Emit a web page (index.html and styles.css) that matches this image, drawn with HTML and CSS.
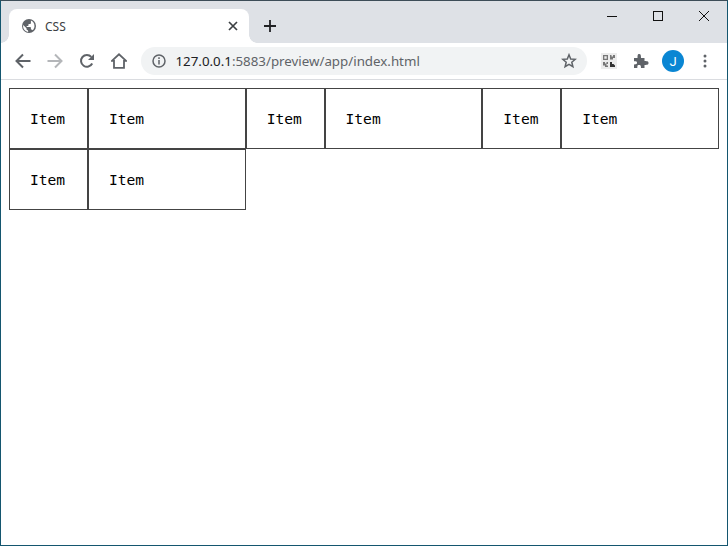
FILE: index.html
```html
<!DOCTYPE html>
<html lang="en">
<head>
<meta charset="utf-8">
<title>CSS</title>
<link rel="stylesheet" href="styles.css">
</head>
<body>
<div class="window">
  <div class="tabstrip">
    <div class="tab">
      <svg class="favicon" viewBox="0 0 14 14"><circle cx="7" cy="7" r="7" fill="#5f6368"/><path d="M6.300 12.900C3.400 12.600 1.100 10.100 1.100 7c0-.4.1-.7.1-1.100L4.500 9.200v.7c0 .7.5 1.200 1.200 1.200Zm4.300-1.600c-.2-.5-.6-.8-1.100-.8h-.6V8.700c0-.3-.3-.6-.6-.6H4.700V6.900h1.200c.3 0 .6-.3.600-.6V5.100h1.200c.7 0 1.200-.5 1.200-1.200V1.600c2.100.8 3.600 2.900 3.600 5.400 0 1.700-.7 3.200-1.900 4.300Z" fill="#fff"/></svg>
      <span class="tab-title">CSS</span>
      <svg class="tab-close" viewBox="0 0 10 10"><path d="M1 1 9 9M9 1 1 9" stroke="#3c4043" stroke-width="1.700" fill="none"/></svg>
    </div>
    <div class="newtab">
      <svg viewBox="0 0 12 12" width="12" height="12"><path d="M6 0V12M0 6H12" stroke="#202124" stroke-width="1.800" fill="none"/></svg>
    </div>
    <div class="spacer"></div>
    <div class="winbtn"><svg viewBox="0 0 10 10" width="10" height="10"><path d="M0 5.500H10" stroke="#111" fill="none"/></svg></div>
    <div class="winbtn"><svg viewBox="0 0 10 10" width="10" height="10"><rect x=".5" y=".5" width="9" height="9" stroke="#111" fill="none"/></svg></div>
    <div class="winbtn"><svg viewBox="0 0 10 10" width="10" height="10"><path d="M0 0 10 10M10 0 0 10" stroke="#111" fill="none"/></svg></div>
  </div>
  <div class="toolbar">
    <div class="tbtn"><svg viewBox="0 0 16 16" width="16" height="16"><path d="M15.500 8H2M8 1.500 1.500 8 8 14.500" stroke="#5f6368" stroke-width="2" fill="none"/></svg></div>
    <div class="tbtn"><svg viewBox="0 0 16 16" width="16" height="16"><path d="M.5 8H14M8 1.500 14.500 8 8 14.500" stroke="#b4b6b9" stroke-width="2" fill="none"/></svg></div>
    <div class="tbtn"><svg viewBox="0 0 16 16" width="16" height="16"><path d="M13.200 10.500A5.900 5.900 0 1 1 12.300 3.900" stroke="#5f6368" stroke-width="2" fill="none"/><path d="M15 1V7H9Z" fill="#5f6368"/></svg></div>
    <div class="tbtn"><svg viewBox="0 0 16 16" width="16" height="16"><path d="M3 14.800V7.800H.9L8 1.300 15.100 7.800H13V14.800Z" stroke="#5f6368" stroke-width="1.800" fill="none"/></svg></div>
    <div class="omnibox">
      <svg class="info" viewBox="0 0 14 14"><circle cx="7" cy="7" r="6" stroke="#5f6368" stroke-width="1.500" fill="none"/><path d="M7 6V10.500M7 3.300V5" stroke="#5f6368" stroke-width="1.500" fill="none"/></svg>
      <span class="url"><span class="url-host">127.0.0.1</span>:5883/preview/app/index.html</span>
      <svg class="star" viewBox="0 0 16 16"><path d="M8 1.800 9.700 6 14.300 6.300 10.800 9.200 11.900 13.700 8 11.300 4.100 13.700 5.200 9.200 1.700 6.300 6.300 6Z" stroke="#5f6368" stroke-width="1.500" fill="none"/></svg>
    </div>
    <div class="tbtn"><svg viewBox="0 0 16 16" width="16" height="16"><rect width="16" height="17" fill="#ececec"/><path d="M2 2H7V7H2ZM3.300 3.300V5.700H5.700V3.300ZM9 2H10.500V3.500H12V2H14V5H12V6.500H9ZM2 9H4V10.500H5.500V9H7V11H5.500V12.500H7V14H4V12.500H2Z" fill="#777"/><path d="M9 9H11V11H12.500L14 12.500V14H9Z" fill="#333"/></svg></div>
    <div class="tbtn"><svg viewBox="0 0 16 16" width="16" height="16"><path d="M1 5H4.500C4.500 1.500 4.800 1 6.300 1S8 2.200 8 5H11.500V8C15 8 15.500 8.700 15.500 10S15 12 11.500 12V15H8C8 12.500 7.500 12 6 12S4.300 12.500 4.300 15H1V11.500C3.500 11.500 4 11 4 9.800S3.500 8.300 1 8.300Z" fill="#5f6368"/></svg></div>
    <div class="tbtn"><span class="avatar">J</span></div>
    <div class="tbtn"><svg viewBox="0 0 4 14" width="4" height="14"><circle cx="2" cy="2" r="1.500" fill="#5f6368"/><circle cx="2" cy="7" r="1.500" fill="#5f6368"/><circle cx="2" cy="12" r="1.500" fill="#5f6368"/></svg></div>
  </div>
  <main class="page">
    <div class="grid">
      <div class="item">Item</div>
      <div class="item">Item</div>
      <div class="item">Item</div>
      <div class="item">Item</div>
      <div class="item">Item</div>
      <div class="item">Item</div>
      <div class="item">Item</div>
      <div class="item">Item</div>
    </div>
  </main>
</div>
</body>
</html>
```
FILE: styles.css
```css
* { box-sizing: border-box; }
html, body { margin: 0; padding: 0; background: #fff; }
.window {
  width: 728px;
  height: 546px;
  display: flex;
  flex-direction: column;
  overflow: hidden;
  border: 1px solid #14566f;
  border-top-color: #3d4d58;
  font-family: "Noto Sans", sans-serif;
}
.tabstrip {
  height: 42px;
  flex: none;
  display: flex;
  align-items: flex-start;
  background: #dee1e6;
  padding-left: 8px;
}
.tab {
  position: relative;
  width: 240px;
  height: 34px;
  margin-top: 8px;
  display: flex;
  align-items: center;
  padding-left: 13px;
  background: #fff;
  border-radius: 8px 8px 0 0;
}
.tab::before, .tab::after {
  content: "";
  position: absolute;
  bottom: 0;
  width: 8px;
  height: 8px;
}
.tab::before {
  left: -8px;
  background: radial-gradient(circle at 0 0, transparent 7.500px, #fff 8px);
}
.tab::after {
  right: -8px;
  background: radial-gradient(circle at 100% 0, transparent 7.500px, #fff 8px);
}
.favicon { width: 14px; height: 14px; flex: none; }
.tab-title {
  margin-left: 9px;
  flex: 1;
  font-size: 12px;
  color: #3c4043;
}
.tab-close { width: 10px; height: 10px; flex: none; margin-right: 11px; }
.newtab {
  width: 28px;
  height: 28px;
  margin: 11px 0 0 7px;
  display: flex;
  align-items: center;
  justify-content: center;
}
.spacer { flex: 1; }
.winbtn {
  width: 46px;
  height: 29px;
  display: flex;
  align-items: center;
  justify-content: center;
}
.toolbar {
  height: 37px;
  flex: none;
  display: flex;
  align-items: flex-start;
  padding: 0 6px;
  background: #fff;
  border-bottom: 1px solid #dadce0;
}
.tbtn {
  width: 32px;
  height: 36px;
  flex: none;
  display: flex;
  align-items: center;
  justify-content: center;
}
.omnibox {
  width: 446px;
  height: 28px;
  margin: 4px 6px;
  flex: none;
  display: flex;
  align-items: center;
  padding: 0 10px 0 11px;
  background: #f1f3f4;
  border-radius: 14px;
}
.info { width: 14px; height: 14px; flex: none; }
.url {
  flex: 1;
  margin-left: 9.500px;
  font-size: 13.320px;
  color: #5f6368;
  white-space: nowrap;
}
.url-host { color: #202124; }
.star { width: 16px; height: 16px; flex: none; }
.avatar {
  width: 22px;
  height: 22px;
  border-radius: 50%;
  background: #0a86d3;
  color: #fff;
  font-family: "Roboto", sans-serif;
  font-size: 13px;
  display: flex;
  align-items: center;
  justify-content: center;
}
.page {
  flex: 1;
  padding: 8px;
  background: #fff;
}
.grid {
  display: grid;
  grid-template-columns: repeat(3, 1fr 2fr);
}
.item {
  padding: 20px;
  border: 1px solid #444;
  font-family: "DejaVu Sans Mono", monospace;
  font-size: 14.600px;
  line-height: 19px;
  color: #000;
}
```
